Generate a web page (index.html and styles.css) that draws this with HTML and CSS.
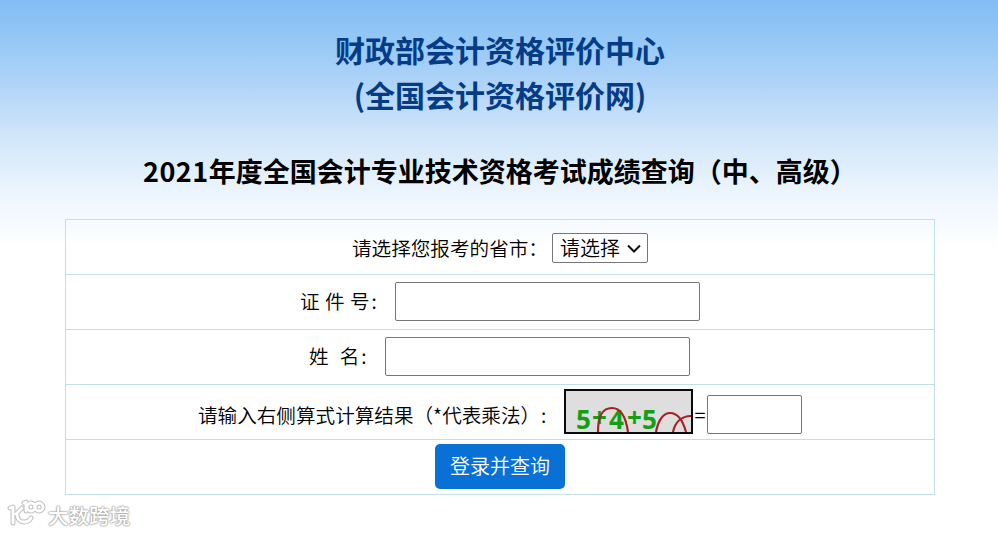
FILE: index.html
```html
<!DOCTYPE html>
<html lang="zh-CN">
<head>
	<meta charset="UTF-8">
	<title>成绩查询</title>
	<link rel="stylesheet" href="styles.css">
</head>
<body>
	<h1>财政部会计资格评价中心<br>(全国会计资格评价网)</h1>
	<h2><span class="year">2021</span>年度全国会计专业技术资格考试成绩查询（中、高级）</h2>
	<form class="query">
		<div class="row province-row">
			<label class="label province" for="province">请选择您报考的省市：</label>
			<div class="select-box">
				<select id="province"><option>请选择</option></select>
				<svg class="arrow" width="14" height="10" viewBox="0 0 14 10"><path d="M1 1.5l6 6 6-6" fill="none" stroke="#111" stroke-width="2"/></svg>
			</div>
		</div>
		<div class="row">
			<label class="label card" for="card">证 件 号<span class="colon">:</span></label>
			<input id="card" class="text" type="text">
		</div>
		<div class="row name-row">
			<label class="label name" for="name">姓&nbsp; 名<span class="colon">:</span></label>
			<input id="name" class="text" type="text">
		</div>
		<div class="row code-row">
			<label class="label code" for="code">请输入右侧算式计算结果（*代表乘法）<span class="colon">:</span></label>
			<svg class="captcha" width="129" height="45" viewBox="0 0 129 45">
				<rect x="1" y="1" width="127" height="43" fill="#dedede" stroke="#0a0a12" stroke-width="2"/>
				<g class="digits" fill="#12a012">
					<text x="12" y="40">5</text>
					<text x="28" y="38">+</text>
					<text x="45" y="40">4</text>
					<text x="63" y="38">+</text>
					<text x="78" y="40">5</text>
				</g>
				<g fill="none" stroke="#a82020" stroke-width="2.2">
					<path d="M34 43c0-14 3-24 14-24 10 0 14 10 16 24"/>
					<path d="M92 43c2-11 7-19 14-19 8 0 13 8 16 19"/>
					<path d="M109 43c2-9 8-16 18-16"/>
				</g>
			</svg>
			<span class="equal">=</span>
			<input id="code" class="text short" type="text">
		</div>
		<div class="row btn-row">
			<button class="btn" type="button">登录并查询</button>
		</div>
	</form>
	<div class="mark">
		<svg width="40" height="30" viewBox="0 0 40 30">
			<g fill="none" stroke-linecap="round" stroke-linejoin="round">
				<g stroke="#c4c4c4" stroke-width="5">
					<path d="M3 10l3-1v16M15 10l-6 6M10 16c0 5 3 8 7 8s6-2 7-4M17 5l2-1v9"/>
					<circle cx="24" cy="9" r="4"/><circle cx="32" cy="9" r="4"/>
				</g>
				<g stroke="#fff" stroke-width="2.8">
					<path d="M3 10l3-1v16M15 10l-6 6M10 16c0 5 3 8 7 8s6-2 7-4M17 5l2-1v9"/>
					<circle cx="24" cy="9" r="4"/><circle cx="32" cy="9" r="4"/>
				</g>
			</g>
		</svg>
		<span class="mark-text">大数跨境</span>
	</div>
</body>
</html>
```
FILE: styles.css
```css
* {margin: 0; padding: 0; box-sizing: border-box;}
body {
	height: 534px;
	overflow: hidden;
	position: relative;
	font-family: "Noto Sans CJK SC", sans-serif;
	color: #000;
	background: #fff linear-gradient(#82bdf4 0, #8fc5f5 30px, #b0d4f8 85px, #d0e5fa 135px, #e9f3fd 185px, #f6fafe 220px, #fff 250px) no-repeat;
}
h1 {padding: 27px 0 0 2px; font-size: 30px; line-height: 45px; color: #043c88; text-align: center;}
h2 {
	height: 40px;
	margin: 34px 0 28px 143px;
	font-size: 27px;
	line-height: 40px;
	white-space: nowrap;
}
.year {letter-spacing: .5px;}
.query {width: 870px; height: 276px; margin: 0 auto 0 65px; border: 1px solid #c2dfeb; border-bottom: 0;}
.row {
	display: flex;
	height: 55px;
	justify-content: center;
	align-items: center;
	padding-bottom: 2px;
	border-bottom: 1px solid #c2dfeb;
}
.province-row {padding: 1px 0 0;}
.label {font-size: 19.6px; line-height: 30px; white-space: nowrap; font-weight: 350;}
.province {width: 200px;}
.card {width: 95px; word-spacing: 1px;}
.name {width: 76px; word-spacing: 1.2px;}
.name-row {padding-right: 1px;}
.colon {margin-left: 2px;}
.code {width: 366px;}
.code .colon {margin-left: 1px;}
.select-box {display: flex; position: relative; width: 96px; height: 30px;}
.select-box select {
	width: 96px;
	padding-left: 7px;
	font: 350 20px "Noto Sans CJK SC", sans-serif;
	line-height: 28px;
	color: #000;
	background: #fff;
	border: 1px solid #767676;
	border-radius: 2px;
	appearance: none;
}
.arrow {position: absolute; right: 7px; top: 11px;}
.text {width: 305px; height: 39px; padding: 0 6px; font-size: 20px; background: #fff; border: 1px solid #767676; border-radius: 2px;}
.short {width: 95px;}
.code-row {align-items: flex-end; padding-bottom: 5px;}
.code-row .label {padding-bottom: 4px;}
.captcha {display: block; overflow: visible;}
.digits {font: bold 26px/1 "Open Sans", sans-serif;}
.equal {width: 14px; padding-bottom: 4px; font-size: 20px; line-height: 30px; text-align: center; font-weight: 350;}
.btn-row {align-items: flex-start; padding-top: 4px;}
.btn {
	width: 130px;
	height: 45px;
	padding-bottom: 2px;
	font: 350 20px "Noto Sans CJK SC", sans-serif;
	color: #fff;
	background: #0970d6;
	border: 0;
	border-radius: 5px;
}
.mark {display: flex; gap: 1px; padding: 3px 0 0 7px;}
.mark-text {
	font-size: 20.5px;
	font-weight: 500;
	line-height: 34px;
	color: #fff;
	text-shadow: 0 0 2px #999, 0 0 2px #999, 0 0 1px #aaa;
}
```
